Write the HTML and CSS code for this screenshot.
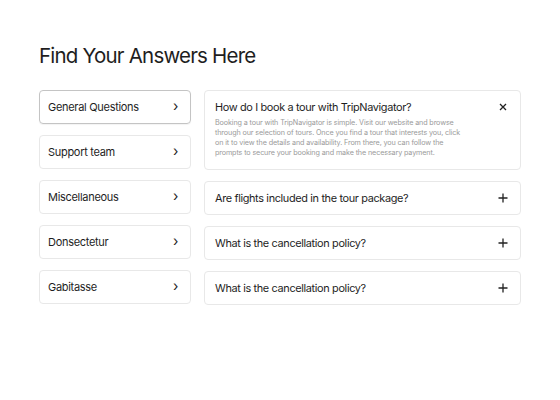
FILE: index.html
```html
<!DOCTYPE html>
<html>
<head>
<meta charset="utf-8">
<link rel="stylesheet" href="styles.css">
</head>
<body>
<main class="page">
  <h1 class="title">Find Your Answers Here</h1>
  <div class="layout">
    <nav class="cats">
      <div class="cat active"><span>General Questions</span><span class="chev">&#8250;</span></div>
      <div class="cat"><span>Support team</span><span class="chev">&#8250;</span></div>
      <div class="cat"><span>Miscellaneous</span><span class="chev">&#8250;</span></div>
      <div class="cat"><span>Donsectetur</span><span class="chev">&#8250;</span></div>
      <div class="cat"><span>Gabitasse</span><span class="chev">&#8250;</span></div>
    </nav>
    <section class="faqs">
      <div class="faq open">
        <div class="q"><span>How do I book a tour with TripNavigator?</span>
          <svg class="icon" width="10" height="10" viewBox="0 0 10 10"><path d="M2 2L8 8M8 2L2 8" stroke="#222" stroke-width="1.3" fill="none"/></svg>
        </div>
        <p class="a">Booking a tour with TripNavigator is simple. Visit our website and browse through our selection of tours. Once you find a tour that interests you, click on it to view the details and availability. From there, you can follow the prompts to secure your booking and make the necessary payment.</p>
      </div>
      <div class="faq">
        <div class="q"><span>Are flights included in the tour package?</span>
          <svg class="icon" width="10" height="10" viewBox="0 0 10 10"><path d="M5 0.5V9.5M0.5 5H9.5" stroke="#222" stroke-width="1.3" fill="none"/></svg>
        </div>
      </div>
      <div class="faq">
        <div class="q"><span>What is the cancellation policy?</span>
          <svg class="icon" width="10" height="10" viewBox="0 0 10 10"><path d="M5 0.5V9.5M0.5 5H9.5" stroke="#222" stroke-width="1.3" fill="none"/></svg>
        </div>
      </div>
      <div class="faq">
        <div class="q"><span>What is the cancellation policy?</span>
          <svg class="icon" width="10" height="10" viewBox="0 0 10 10"><path d="M5 0.5V9.5M0.5 5H9.5" stroke="#222" stroke-width="1.3" fill="none"/></svg>
        </div>
      </div>
    </section>
  </div>
</main>
</body>
</html>
```
FILE: styles.css
```css
* { box-sizing: border-box; }
html, body { margin: 0; background: #fff; }
body {
  font-family: Inter, "Noto Sans", sans-serif;
  color: #1e1e1e;
}
.page {
  padding: 43px 0 0 39px;
  width: 560px;
}
.title {
  margin: 0 0 22px 0;
  font-size: 20.5px;
  font-weight: 400;
  letter-spacing: -0.8px;
  line-height: 25px;
}
.layout {
  display: grid;
  grid-template-columns: 152px 317px;
  column-gap: 13px;
  align-items: start;
}
.cats {
  display: flex;
  flex-direction: column;
  gap: 11px;
}
.cat {
  height: 34px;
  border: 1px solid #e8e8e8;
  border-radius: 4px;
  display: flex;
  align-items: center;
  justify-content: space-between;
  padding: 0 12px 0 8px;
  font-size: 11px;
  letter-spacing: -0.3px;
}
.cat.active {
  border-color: #c4c4c4;
  box-shadow: 0 1px 1px rgba(0,0,0,0.05);
}
.chev {
  font-size: 14px;
  line-height: 1;
  margin-top: -2px;
}
.faqs {
  display: flex;
  flex-direction: column;
  gap: 11px;
}
.faq {
  border: 1px solid #e8e8e8;
  border-radius: 4px;
  padding: 0 12px 0 10px;
}
.q {
  height: 32px;
  display: flex;
  align-items: center;
  justify-content: space-between;
  font-size: 10.9px;
  letter-spacing: -0.35px;
}
.open .q { height: 31px; }
.icon { display: block; }
.a {
  margin: -4px 0 11px 0;
  max-width: 252px;
  font-size: 7.2px;
  line-height: 10px;
  color: #9a9a9a;
  letter-spacing: -0.12px;
}
```
